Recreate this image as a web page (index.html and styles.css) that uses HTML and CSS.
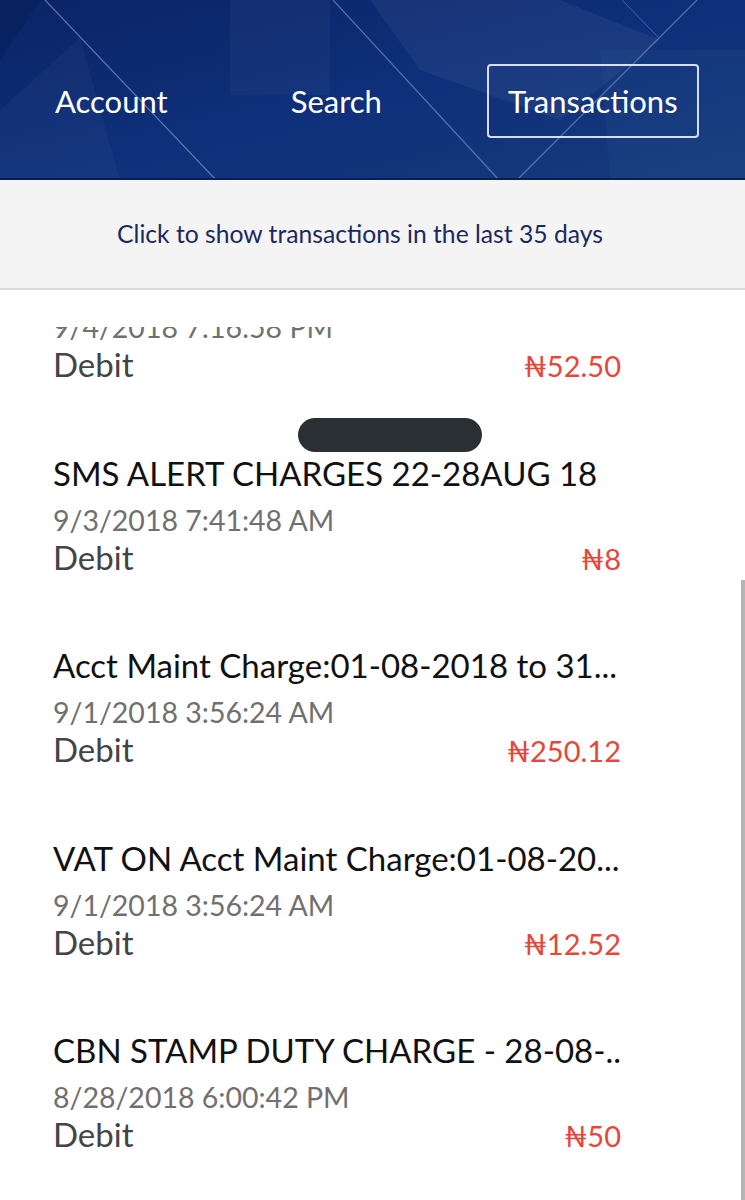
FILE: index.html
```html
<!DOCTYPE html>
<html lang="en">
<head>
    <meta charset="UTF-8">
    <meta name="viewport" content="width=device-width, initial-scale=1.0">
    <title>Transactions</title>

    <link rel="stylesheet" href="styles.css">
</head>
<body>
    <header class="topbar">
        <svg class="topbar-art" viewBox="0 0 745 180" preserveAspectRatio="none">
            <defs>
                <linearGradient id="sky" x1="0" y1="0" x2="1" y2="1">
                    <stop offset="0" stop-color="#0a2566"/>
                    <stop offset="0.5" stop-color="#0e2f7a"/>
                    <stop offset="1" stop-color="#173a7c"/>
                </linearGradient>
            </defs>
            <rect width="745" height="180" fill="url(#sky)"/>
            <polygon points="0,0 40,0 0,60" fill="#06205a" opacity="0.6"/>
            <polygon points="230,0 330,0 330,95 230,95" fill="#ffffff" opacity="0.03"/>
            <polygon points="370,0 560,0 660,40 560,120 420,70" fill="#ffffff" opacity="0.05"/>
            <polygon points="600,50 745,50 745,180 610,180" fill="#3a6aa0" opacity="0.12"/>
            <polygon points="0,110 80,38 120,180 0,180" fill="#ffffff" opacity="0.03"/>
            <line x1="45" y1="0" x2="216" y2="180" stroke="#9fb3dc" stroke-width="1.2" opacity="0.55"/>
            <line x1="333" y1="0" x2="499" y2="180" stroke="#9fb3dc" stroke-width="1.2" opacity="0.5"/>
            <line x1="697" y1="0" x2="517" y2="180" stroke="#9fb3dc" stroke-width="1.2" opacity="0.5"/>
            <line x1="622" y1="0" x2="658" y2="37" stroke="#9fb3dc" stroke-width="1" opacity="0.4"/>
            <rect y="178" width="745" height="2" fill="#0a1f50"/>
        </svg>
        <nav class="tabs">
            <a class="tab tab-account">Account</a>
            <a class="tab tab-search">Search</a>
            <a class="tab tab-active">Transactions</a>
        </nav>
    </header>

    <div class="range-bar">Click to show transactions in the last 35 days</div>

    <main class="list">
        <div class="list-view">
            <ul class="txns">
                <li class="txn">
                    <div class="txn-title">SMS ALERT CHARGES 29AUG-04SEP 18</div>
                    <div class="txn-date">9/4/2018 7:16:58 PM</div>
                    <div class="txn-line">
                        <span class="txn-type">Debit</span>
                        <span class="txn-amount">₦52.50</span>
                    </div>
                </li>
                <li class="txn">
                    <div class="txn-title">SMS ALERT CHARGES 22-28AUG 18</div>
                    <div class="txn-date">9/3/2018 7:41:48 AM</div>
                    <div class="txn-line">
                        <span class="txn-type">Debit</span>
                        <span class="txn-amount">₦8</span>
                    </div>
                </li>
                <li class="txn">
                    <div class="txn-title">Acct Maint Charge:01-08-2018 to 31...</div>
                    <div class="txn-date">9/1/2018 3:56:24 AM</div>
                    <div class="txn-line">
                        <span class="txn-type">Debit</span>
                        <span class="txn-amount">₦250.12</span>
                    </div>
                </li>
                <li class="txn">
                    <div class="txn-title">VAT ON Acct Maint Charge:01-08-20...</div>
                    <div class="txn-date">9/1/2018 3:56:24 AM</div>
                    <div class="txn-line">
                        <span class="txn-type">Debit</span>
                        <span class="txn-amount">₦12.52</span>
                    </div>
                </li>
                <li class="txn">
                    <div class="txn-title">CBN STAMP DUTY CHARGE - 28-08-..</div>
                    <div class="txn-date">8/28/2018 6:00:42 PM</div>
                    <div class="txn-line">
                        <span class="txn-type">Debit</span>
                        <span class="txn-amount">₦50</span>
                    </div>
                </li>
            </ul>
        </div>
        <div class="redact"></div>
        <div class="scrollbar"></div>
    </main>
</body>
</html>
```

FILE: styles.css
```css
* {
    margin: 0;
    padding: 0;
    box-sizing: border-box;
    font-family: 'Lato', 'DejaVu Sans', sans-serif;
}

body {
    width: 745px;
    height: 1200px;
    background: white;
    overflow: hidden;
}

.topbar {
    position: relative;
    height: 180px;
    overflow: hidden;
}

.topbar-art {
    position: absolute;
    top: 0;
    left: 0;
    width: 100%;
    height: 100%;
}

.tabs {
    position: relative;
    display: flex;
    align-items: center;
    height: 100%;
    padding: 22px 0 0 55px;
}

.tab {
    color: white;
    font-size: 31px;
    line-height: 74px;
    cursor: pointer;
}

.tab-search {
    margin-left: 123px;
}

.tab-active {
    margin-left: 105px;
    height: 74px;
    padding: 0 19px;
    border: 2px solid rgba(235, 240, 250, 0.9);
    border-radius: 4px;
    line-height: 70px;
}

.range-bar {
    height: 110px;
    padding-right: 25px;
    background: #f4f4f5;
    border-bottom: 2px solid #dcdcdc;
    color: #1b2a5e;
    font-size: 24.7px;
    text-align: center;
    line-height: 108px;
    cursor: pointer;
}

.list {
    position: relative;
    padding-top: 37px;
}

.list-view {
    height: 873px;
    overflow: hidden;
}

.txns {
    list-style: none;
    margin-top: -74px;
    padding: 0 124px 0 53px;
}

.txn {
    padding-bottom: 64.5px;
    white-space: nowrap;
}

.txn-title {
    color: #111;
    font-size: 33px;
    line-height: 54px;
}

.txn-date {
    color: #707070;
    font-size: 28.5px;
    line-height: 40px;
}

.txn-line {
    display: flex;
    justify-content: space-between;
    align-items: baseline;
    height: 34px;
    line-height: 34px;
}

.txn-type {
    color: #444;
    font-size: 33px;
}

.txn-amount {
    color: #e5473a;
    font-size: 29px;
}

.redact {
    position: absolute;
    top: 128px;
    left: 298px;
    width: 184px;
    height: 34px;
    border-radius: 17px;
    background: #2a2f33;
}

.scrollbar {
    position: absolute;
    top: 290px;
    right: 0;
    bottom: 0;
    width: 4px;
    background: #b5b5b5;
}
```
